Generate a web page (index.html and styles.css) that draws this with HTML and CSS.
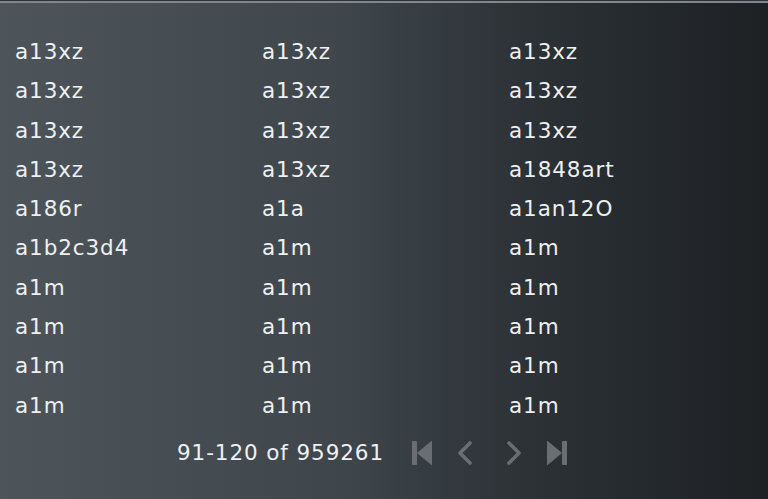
FILE: index.html
```html
<!DOCTYPE html>
<html lang="en">
<head>
    <meta charset="UTF-8">
    <meta name="viewport" content="width=device-width, initial-scale=1.0">
    <title>Nomes</title>
    <link rel="stylesheet" href="styles.css">
</head>
<body>
    <div class="panel">
        <div class="top-line"></div>
        <div class="names">
            <div class="name">a13xz</div>
            <div class="name">a13xz</div>
            <div class="name">a13xz</div>
            <div class="name">a13xz</div>
            <div class="name">a13xz</div>
            <div class="name">a13xz</div>
            <div class="name">a13xz</div>
            <div class="name">a13xz</div>
            <div class="name">a13xz</div>
            <div class="name">a13xz</div>
            <div class="name">a13xz</div>
            <div class="name">a1848art</div>
            <div class="name">a186r</div>
            <div class="name">a1a</div>
            <div class="name">a1an12O</div>
            <div class="name">a1b2c3d4</div>
            <div class="name">a1m</div>
            <div class="name">a1m</div>
            <div class="name">a1m</div>
            <div class="name">a1m</div>
            <div class="name">a1m</div>
            <div class="name">a1m</div>
            <div class="name">a1m</div>
            <div class="name">a1m</div>
            <div class="name">a1m</div>
            <div class="name">a1m</div>
            <div class="name">a1m</div>
            <div class="name">a1m</div>
            <div class="name">a1m</div>
            <div class="name">a1m</div>
        </div>
        <div class="pager">
            <span class="range">91-120 of 959261</span>
            <button class="page-btn first" title="Primeira">
                <svg width="20" height="24" viewBox="0 0 20 24"><rect x="0" y="0" width="4.5" height="24" rx="1"/><path d="M20 0 L20 24 L5.5 12 Z"/></svg>
            </button>
            <button class="page-btn prev" title="Anterior">
                <svg width="16" height="24" viewBox="0 0 16 24"><path d="M13 2 L3 12 L13 22" fill="none" stroke-width="3.6" stroke-linecap="round" stroke-linejoin="round"/></svg>
            </button>
            <button class="page-btn next" title="Próxima">
                <svg width="16" height="24" viewBox="0 0 16 24"><path d="M3 2 L13 12 L3 22" fill="none" stroke-width="3.6" stroke-linecap="round" stroke-linejoin="round"/></svg>
            </button>
            <button class="page-btn last" title="Última">
                <svg width="20" height="24" viewBox="0 0 20 24"><path d="M0 0 L0 24 L14.5 12 Z"/><rect x="15.5" y="0" width="4.5" height="24" rx="1"/></svg>
            </button>
        </div>
    </div>
</body>
</html>
```

FILE: styles.css
```css
html, body {
    margin: 0;
    height: 100%;
}
body {
    font-family: "DejaVu Sans", "Open Sans", sans-serif;
    background: #1e2225;
    color: #eef0f1;
}
.panel {
    height: 499px;
    background: linear-gradient(to right, #4d555b 0%, #3e454b 45%, #2c3236 68%, #1d2124 100%);
    box-sizing: border-box;
}
.top-line {
    height: 1px;
    border-bottom: 2px solid #80868a;
    background: #2c3236;
}
.names {
    display: grid;
    grid-template-columns: repeat(3, 247px);
    grid-auto-rows: 39.3px;
    padding: 29px 0 0 15px;
}
.name {
    font-size: 21.5px;
    line-height: 39.3px;
    letter-spacing: 0.9px;
}
.pager {
    display: flex;
    align-items: center;
    height: 56px;
    padding-left: 177px;
}
.range {
    font-size: 21.5px;
    letter-spacing: 0.9px;
    margin-right: 28px;
}
.page-btn {
    background: none;
    border: none;
    padding: 0;
    display: flex;
    cursor: pointer;
}
.page-btn svg {
    fill: #6a6e72;
    stroke: #6a6e72;
}
.prev {
    margin-left: 25px;
}
.next {
    margin-left: 33px;
}
.last {
    margin-left: 25px;
}
```
